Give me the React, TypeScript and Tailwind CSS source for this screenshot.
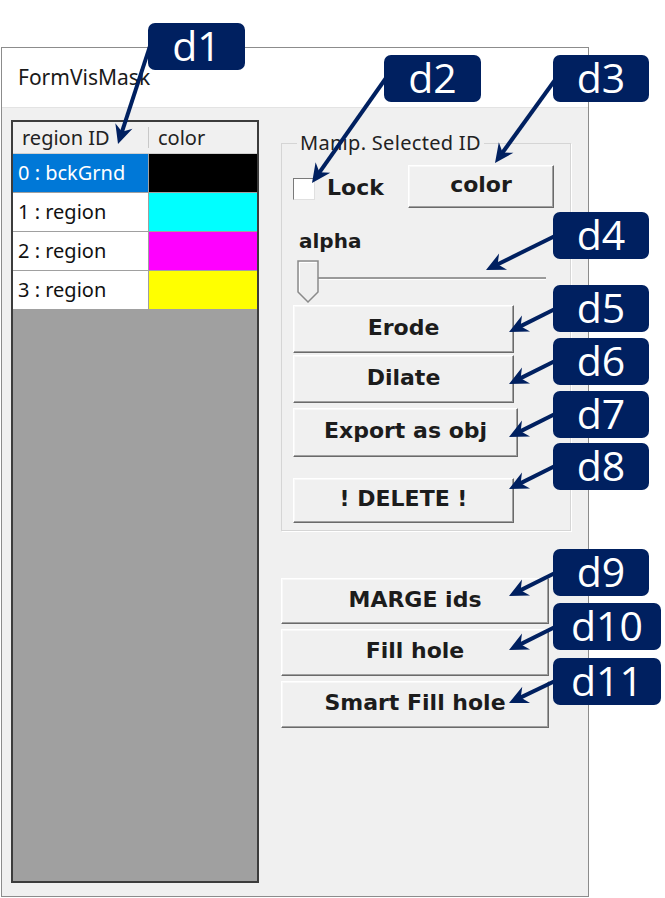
import { ReactNode } from 'react';

type Row = { id: string; color: string; selected?: boolean };

const rows: Row[] = [
  { id: '0 : bckGrnd', color: 'bg-black', selected: true },
  { id: '1 : region', color: 'bg-[#00ffff]' },
  { id: '2 : region', color: 'bg-[#ff00ff]' },
  { id: '3 : region', color: 'bg-[#ffff00]' },
];

type Note = { label: string; box: string; from: [number, number]; to: [number, number] };

const notes: Note[] = [
  { label: 'd1', box: 'left-[148px] top-[23px] w-[97px]', from: [150, 46], to: [118, 144] },
  { label: 'd2', box: 'left-[384px] top-[55px] w-[97px]', from: [386, 78], to: [312, 183] },
  { label: 'd3', box: 'left-[553px] top-[55px] w-[96px]', from: [555, 80], to: [495, 163] },
  { label: 'd4', box: 'left-[553px] top-[212px] w-[96px]', from: [555, 236], to: [486, 270] },
  { label: 'd5', box: 'left-[553px] top-[285px] w-[96px]', from: [555, 309], to: [509, 332] },
  { label: 'd6', box: 'left-[553px] top-[338px] w-[96px]', from: [555, 361], to: [509, 384] },
  { label: 'd7', box: 'left-[553px] top-[391px] w-[96px]', from: [555, 414], to: [509, 437] },
  { label: 'd8', box: 'left-[553px] top-[443px] w-[96px]', from: [555, 466], to: [509, 489] },
  { label: 'd9', box: 'left-[553px] top-[549px] w-[96px]', from: [555, 573], to: [509, 596] },
  { label: 'd10', box: 'left-[553px] top-[603px] w-[108px]', from: [555, 627], to: [509, 650] },
  { label: 'd11', box: 'left-[553px] top-[658px] w-[108px]', from: [555, 681], to: [509, 703] },
];

function arrowHead(from: [number, number], to: [number, number]) {
  const dx = to[0] - from[0];
  const dy = to[1] - from[1];
  const len = Math.hypot(dx, dy);
  const ux = dx / len;
  const uy = dy / len;
  const px = -uy;
  const py = ux;
  const back = 19;
  const half = 9;
  const notch = 13;
  const bx = to[0] - ux * back;
  const by = to[1] - uy * back;
  const nx = to[0] - ux * notch;
  const ny = to[1] - uy * notch;
  return `${to[0]},${to[1]} ${bx + px * half},${by + py * half} ${nx},${ny} ${bx - px * half},${by - py * half}`;
}

// stop the shaft short of the tip so the head keeps its point
function shaftEnd(from: [number, number], to: [number, number]) {
  const len = Math.hypot(to[0] - from[0], to[1] - from[1]);
  return [to[0] - ((to[0] - from[0]) / len) * 12, to[1] - ((to[1] - from[1]) / len) * 12];
}

function WinButton({ children, className }: { children: ReactNode; className: string }) {
  return (
    <div
      className={`flex items-center justify-center pb-[4px] bg-[#f0f0f0] border border-t-white border-l-white border-b-[#6a6a6a] border-r-[#6a6a6a] shadow-[inset_-1px_-1px_0_#a0a0a0,inset_1px_1px_0_#f8f8f8] font-bold text-[22px] text-[#1c1c1c] ${className}`}
    >
      {children}
    </div>
  );
}

export default function App() {
  return (
    <div className="relative w-[665px] h-[898px] bg-white overflow-hidden font-['DejaVu_Sans',sans-serif]">
      <div className="ml-px mt-[47px] w-[588px] h-[850px] border border-[#8c8c8c] flex flex-col">
        <div className="h-[60px] bg-white border-b border-[#e3e3e3] pl-[16px] pt-[14px] font-['Noto_Sans',sans-serif] text-[21px] text-[#1a1a1a]">
          FormVisMask
        </div>
        <div className="flex-1 bg-[#f0f0f0] flex gap-[22px] pl-[9px] pt-[12px]">
          <div className="w-[248px] h-[763px] border-2 border-[#3c3c3c] bg-[#a0a0a0] flex flex-col font-['Noto_Sans',sans-serif] text-[20px]">
            <div className="h-[32px] flex bg-[#f0f0f0] border-b border-[#d0d0d0] text-[#222]">
              <div className="w-[136px] pl-[9px] border-r border-[#c8c8c8] my-[5px] flex items-center">region ID</div>
              <div className="flex-1 pl-[9px] flex items-center">color</div>
            </div>
            {rows.map(r => (
              <div key={r.id} className="h-[39px] flex border-b border-[#a0a0a0]">
                <div className={`w-[135px] pl-[5px] flex items-center ${r.selected ? 'bg-[#0078d7] text-white' : 'bg-white text-[#111]'}`}>
                  {r.id}
                </div>
                <div className={`flex-1 ml-px ${r.color}`} />
              </div>
            ))}
          </div>

          <div className="flex flex-col pt-[23px]">
            <div className="relative w-[290px] h-[388px] border border-[#d5d5d5] shadow-[1px_1px_0_white] pt-[21px] pl-[11px]">
              <div className="absolute left-[15px] -top-[15px] bg-[#f0f0f0] px-[3px] font-['Noto_Sans',sans-serif] text-[20px] text-[#222] leading-[28px] tracking-[0.3px]">
                Manip. Selected ID
              </div>
              <div className="flex items-center">
                <div className="w-[22px] h-[22px] bg-white border border-[#7a7a7a] border-r-[#e0e0e0] border-b-[#e0e0e0] mt-[4px]" />
                <div className="ml-[12px] font-bold text-[22px] text-[#1c1c1c] mt-[2px]">Lock</div>
                <WinButton className="ml-auto mr-[16px] w-[146px] h-[43px]">color</WinButton>
              </div>
              <div className="mt-[20px] ml-[6px] font-bold text-[20px] text-[#1c1c1c] leading-[26px]">alpha</div>
              <div className="relative h-[44px] mt-[6px] ml-[4px] w-[249px] flex items-center">
                <div className="absolute left-[20px] right-0 top-[17px] h-[3px] bg-[#9a9a9a] border-b border-white" />
                <svg width="23" height="44" viewBox="0 0 23 44" className="relative">
                  <path d="M1 1 H21 V32 L11 42 L1 32 Z" fill="#efefef" stroke="#8a8a8a" strokeWidth="1.5" />
                  <path d="M2.5 2.5 H19.5 M2.5 2.5 V31.5" stroke="#ffffff" strokeWidth="1" fill="none" />
                </svg>
              </div>
              <WinButton className="mt-px w-[221px] h-[48px]">Erode</WinButton>
              <WinButton className="mt-[2px] w-[221px] h-[48px]">Dilate</WinButton>
              <WinButton className="mt-[5px] w-[225px] h-[49px]">Export as obj</WinButton>
              <WinButton className="mt-[21px] w-[221px] h-[45px]">! DELETE !</WinButton>
            </div>
            <WinButton className="mt-[47px] w-[268px] h-[46px]">MARGE ids</WinButton>
            <WinButton className="mt-[5px] w-[268px] h-[47px]">Fill hole</WinButton>
            <WinButton className="mt-[5px] w-[268px] h-[47px]">Smart Fill hole</WinButton>
          </div>
        </div>
      </div>

      <svg className="absolute inset-0 pointer-events-none" width="665" height="898">
        {notes.map(n => {
          const [ex, ey] = shaftEnd(n.from, n.to);
          return (
            <g key={n.label}>
              <line x1={n.from[0]} y1={n.from[1]} x2={ex} y2={ey} stroke="#002060" strokeWidth="4" />
              <polygon points={arrowHead(n.from, n.to)} fill="#002060" />
            </g>
          );
        })}
      </svg>
      {notes.map(n => (
        <div
          key={n.label}
          className={`absolute ${n.box} h-[47px] rounded-[7px] bg-[#002060] text-white flex items-center justify-center font-['Open_Sans',sans-serif] text-[41px] leading-none pb-[2px]`}
        >
          {n.label}
        </div>
      ))}
    </div>
  );
}
